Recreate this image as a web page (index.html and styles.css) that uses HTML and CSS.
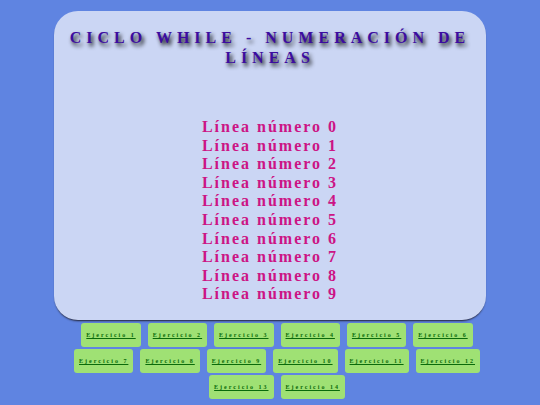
FILE: index.html
```
<!DOCTYPE html>
<html lang="es">
<head>
  <meta charset="UTF-8">
  <title>Ciclo While</title>
  <link rel="stylesheet" href="styles.css">
</head>
<body>
  <main class="contenedor">
    <h1>Ciclo While - Numeración de líneas</h1>

    <div class="lineas">
      <p>Línea número 0</p>
      <p>Línea número 1</p>
      <p>Línea número 2</p>
      <p>Línea número 3</p>
      <p>Línea número 4</p>
      <p>Línea número 5</p>
      <p>Línea número 6</p>
      <p>Línea número 7</p>
      <p>Línea número 8</p>
      <p>Línea número 9</p>
    </div>
  </main>

  <nav class="menu">
    <a href="#ejercicio1">Ejercicio 1</a>
    <a href="#ejercicio2">Ejercicio 2</a>
    <a href="#ejercicio3">Ejercicio 3</a>
    <a href="#ejercicio4">Ejercicio 4</a>
    <a href="#ejercicio5">Ejercicio 5</a>
    <a href="#ejercicio6">Ejercicio 6</a>
    <a href="#ejercicio7">Ejercicio 7</a>
    <a href="#ejercicio8">Ejercicio 8</a>
    <a href="#ejercicio9">Ejercicio 9</a>
    <a href="#ejercicio10">Ejercicio 10</a>
    <a href="#ejercicio11">Ejercicio 11</a>
    <a href="#ejercicio12">Ejercicio 12</a>
    <a href="#ejercicio13">Ejercicio 13</a>
    <a href="#ejercicio14">Ejercicio 14</a>
  </nav>
</body>
</html>
```
FILE: styles.css
```
body {
  margin: 0;
  padding-top: 11px;
  background: #5f84e1;
  font-family: "Liberation Serif", "Times New Roman", serif;
  font-weight: bold;
  text-align: center;
}

.contenedor {
  box-sizing: border-box;
  width: 80%;
  margin: 0 auto;
  padding: 17px 10px 16px;
  background: #cbd6f4;
  border-radius: 24px;
  box-shadow: 0 2px 2px -1px #223;
}

h1 {
  margin: 0 0 50px;
  color: #3c0ca0;
  font-size: 16px;
  line-height: 20px;
  letter-spacing: 5px;
  text-transform: uppercase;
  text-shadow: 2px 3px 4px #000;
}

.lineas {
  display: grid;
  grid-auto-rows: 1fr;
  min-height: 186px;
  color: #cc1485;
  font-size: 16px;
  line-height: 18px;
  letter-spacing: 2px;
}

.lineas p {
  margin: 0;
}

.menu {
  box-sizing: border-box;
  display: flex;
  flex-wrap: wrap;
  justify-content: center;
  gap: 2px 7px;
  width: 80%;
  margin: 3px auto 0;
  padding-left: 14px;
}

.menu a {
  padding: 8px 5px;
  background: #9fe174;
  border-radius: 3px;
  color: #0a6b0a;
  font-size: 6px;
  line-height: 8px;
  letter-spacing: 2px;
}
```
